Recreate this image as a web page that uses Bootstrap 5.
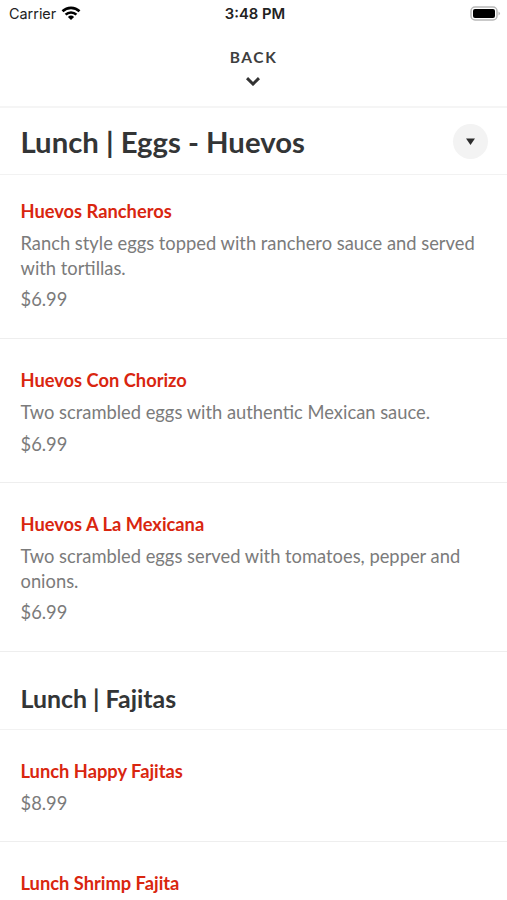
<!DOCTYPE html>
<html lang="en">
<head>
<meta charset="utf-8">
<meta name="viewport" content="width=device-width, initial-scale=1">
<title>Menu</title>
<link href="https://cdn.jsdelivr.net/npm/bootstrap@5.3.0/dist/css/bootstrap.min.css" rel="stylesheet">
<style>
body{font-family:Lato,sans-serif;color:#333536;background:#fff;height:900px;overflow:hidden}
.status{height:28px;font:400 14.4px/28px Inter,sans-serif;color:#222;padding:0 6px 0 9px}
.clock{font-size:14.8px;font-weight:600}
.side{width:80px}
.side svg{margin-top:-1px}
.back{height:80px;padding-top:19px;border-bottom:2px solid #f5f5f5;font-weight:700;font-size:15.5px;letter-spacing:1.6px;line-height:20px;color:#3e3e3e}
.back svg{margin:10px 1px 0 0}
.title-bar{height:67px;padding:1px 19px 0 20.5px;border-bottom:1px solid #f2f2f2}
.title-bar h1{font-size:29.3px;font-weight:700}
.round{width:35px;height:35px;background:#f3f3f3;border:0}
.dish{padding:29px 20.5px 26.3px;border-bottom:1px solid #eee;font-size:18.33px;line-height:24.5px;color:#7b7b7b}
.dish:first-child{padding-top:24px;padding-bottom:26.5px}
.dish h3{font-size:18.3px;line-height:25px;font-weight:700;color:#d9260f;margin:0 0 7px}
.dish p{margin:0 -5px 7px 0}
.dish h3 + div{margin-top:-.5px}
.dish:nth-last-child(2){padding-bottom:26px}
.section-name{height:78px;padding:17px 20.5px 0;border-bottom:1px solid #f2f2f2}
.section-name h2{font-size:24.9px;font-weight:700}
</style>
</head>
<body>
<header>
<div class="status d-flex justify-content-between align-items-center">
<div class="side d-flex align-items-center"><span>Carrier</span>
<svg class="flex-shrink-0 ms-1" width="21" height="16" viewBox="-1 0 21 16"><g fill="none" stroke="#000" stroke-width="2.6"><path d="M1.500 5.300a12.200 12.200 0 0 1 17 0M4.600 8.600a7.800 7.800 0 0 1 10.800 0"/></g><path d="M6.900 10.900a4.500 4.500 0 0 1 6.200 0L10 14z"/></svg></div>
<span class="clock">3:48 PM</span>
<div class="side d-flex justify-content-end"><svg width="31" height="15" viewBox="0 0 31 15"><rect x="1" y="1" width="26" height="13" rx="4" fill="#fff" stroke="#b8b8b8" stroke-width="1.5"/><rect x="3" y="3" width="22" height="9" rx="2"/><path d="M28.500 5.500q3 2 0 4z" fill="#b8b8b8"/></svg></div>
</div>
<div class="back d-flex flex-column align-items-center">BACK
<svg width="14" height="9" viewBox="0 0 14 9"><path d="M1 1.200 7 7l6-5.800" fill="none" stroke="#333" stroke-width="3"/></svg></div>
</header>
<div class="title-bar d-flex justify-content-between align-items-center"><h1 class="m-0">Lunch | Eggs - Huevos</h1>
<button class="round rounded-circle p-0 d-flex align-items-center justify-content-center" aria-label="Choose section"><svg width="9" height="7"><path d="M0 .500h9L4.500 7z" fill="#2d2d2d"/></svg></button></div>
<main>
<article class="dish"><h3>Huevos Rancheros</h3><p>Ranch style eggs topped with ranchero sauce and served with tortillas.</p><div>$6.99</div></article>
<article class="dish"><h3>Huevos Con Chorizo</h3><p>Two scrambled eggs with authentic Mexican sauce.</p><div>$6.99</div></article>
<article class="dish"><h3>Huevos A La Mexicana</h3><p>Two scrambled eggs served with tomatoes, pepper and onions.</p><div>$6.99</div></article>
<div class="section-name d-flex align-items-center"><h2 class="m-0">Lunch | Fajitas</h2></div>
<article class="dish"><h3>Lunch Happy Fajitas</h3><div>$8.99</div></article>
<article class="dish"><h3>Lunch Shrimp Fajita</h3></article>
</main>
<script src="https://cdn.jsdelivr.net/npm/bootstrap@5.3.0/dist/js/bootstrap.bundle.min.js"></script>
</body>
</html>
